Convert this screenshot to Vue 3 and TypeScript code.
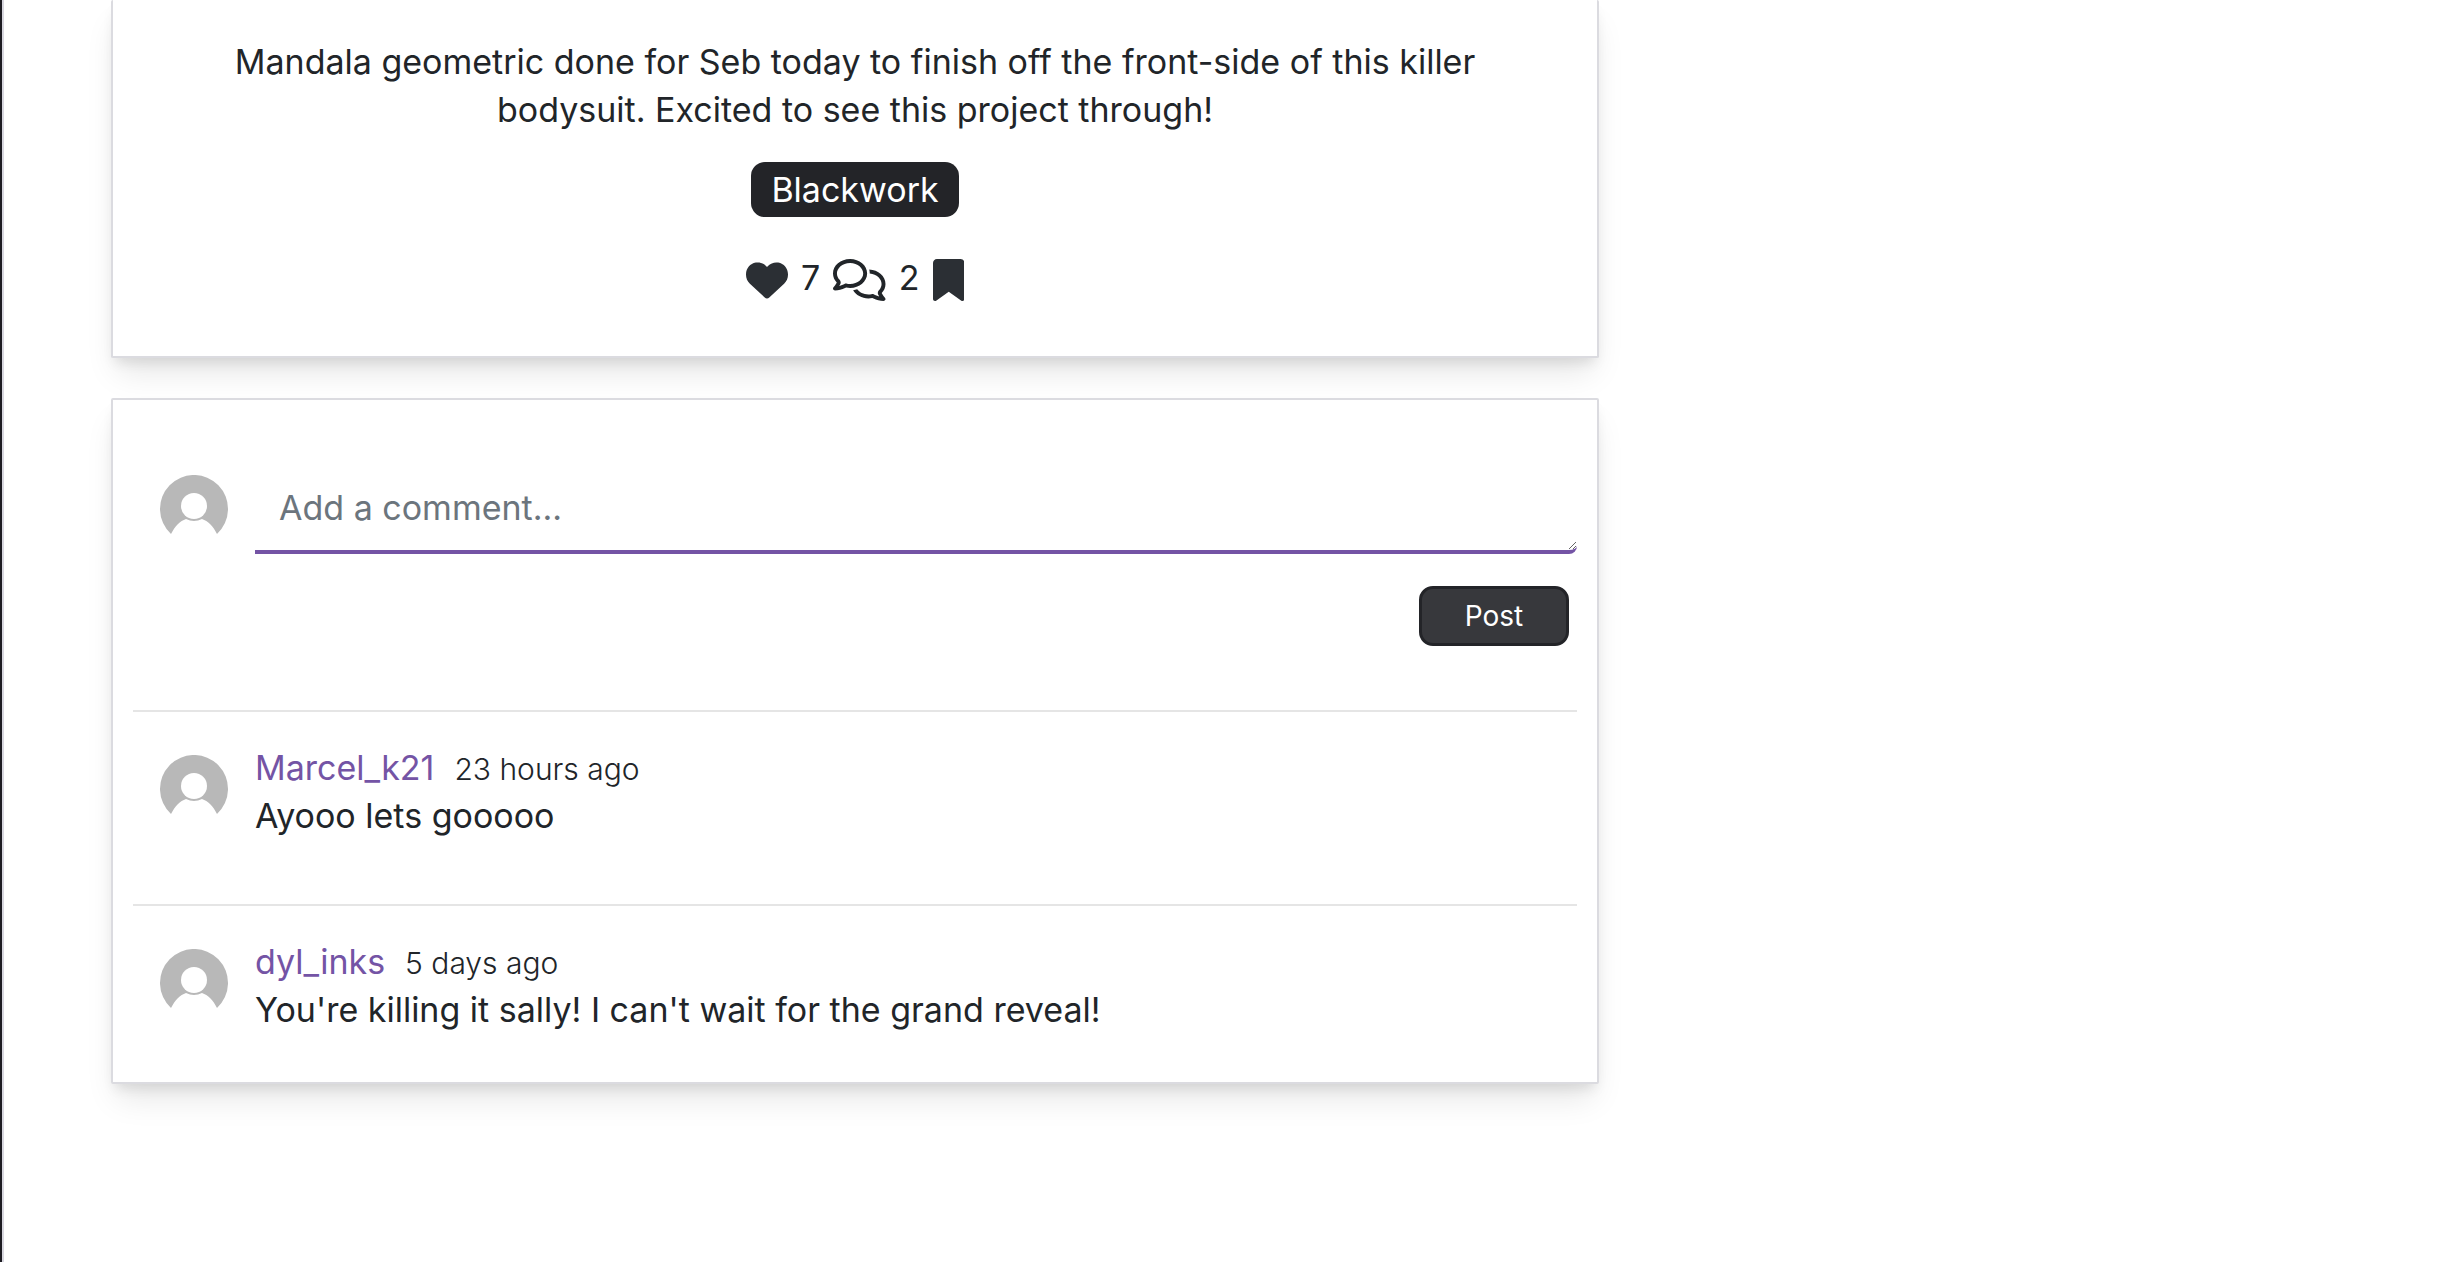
<script setup lang="ts">
import { ref } from 'vue'

interface Comment {
  id: number
  owner: string
  updated: string
  content: string
}

const caption = 'Mandala geometric done for Seb today to finish off the front-side of this killer bodysuit. Excited to see this project through!'
const style = 'Blackwork'
const likes = 7
const commentCount = 2
const draft = ref('')
const comments: Comment[] = [
  { id: 1, owner: 'Marcel_k21', updated: '23 hours ago', content: 'Ayooo lets gooooo' },
  { id: 2, owner: 'dyl_inks', updated: '5 days ago', content: "You're killing it sally! I can't wait for the grand reveal!" },
]
</script>

<template>
  <div class="page">
    <main class="feed">
      <article class="card post">
        <p class="caption">{{ caption }}</p>
        <span class="badge">{{ style }}</span>
        <div class="actions">
          <button class="icon-button" type="button" aria-label="Like">
            <svg class="icon" viewBox="0 0 512 512" aria-hidden="true">
              <path d="M47.6 300.4L228.3 469.1c7.5 7 17.4 10.9 27.7 10.9s20.2-3.9 27.7-10.9L464.4 300.4c30.4-28.3 47.6-68 47.6-109.5v-5.8c0-69.9-50.5-129.5-119.4-141C347 36.5 300.6 51.4 268 84L256 96 244 84c-32.6-32.6-79-47.5-124.6-39.9C50.5 55.6 0 115.2 0 185.1v5.8c0 41.5 17.2 81.2 47.6 109.5z" />
            </svg>
          </button>
          <span class="count">{{ likes }}</span>
          <a class="icon-button comments-link" href="#comments" aria-label="Comments">
            <svg class="icon" viewBox="0 0 640 512" aria-hidden="true">
              <path d="M88.2 309.1c9.8-18.3 6.8-40.8-7.5-55.8C59.4 230.9 48 204 48 176c0-63.5 63.8-128 160-128s160 64.5 160 128s-63.8 128-160 128c-13.1 0-25.8-1.3-37.8-3.6c-10.4-2-21.2-.6-30.7 4.2c-4.1 2.1-8.3 4.1-12.6 6c-16 7.2-32.9 13.5-49.9 18c2.8-4.6 5.4-9.1 7.9-13.6c1.1-1.9 2.2-3.9 3.2-5.9zM0 176c0 41.8 17.2 80.1 45.9 110.3c-.9 1.7-1.9 3.5-2.8 5.1c-10.3 18.4-22.3 36.5-36.6 52.1c-6.6 7-8.3 17.2-4.6 25.9C5.8 378.3 14.4 384 24 384c43 0 86.5-13.3 122.7-29.7c4.8-2.2 9.6-4.5 14.2-6.8c15.1 3 30.9 4.5 47.1 4.5c114.9 0 208-78.8 208-176S322.9 0 208 0S0 78.8 0 176zM432 480c16.2 0 31.9-1.6 47.1-4.5c4.6 2.3 9.4 4.6 14.2 6.8C529.5 498.7 573 512 616 512c9.6 0 18.2-5.7 22-14.5c3.8-8.8 2-19-4.6-25.9c-14.2-15.6-26.2-33.7-36.6-52.1c-.9-1.7-1.9-3.4-2.8-5.1C622.8 384.1 640 345.8 640 304c0-94.4-87.9-171.5-198.2-175.8c4.1 15.2 6.2 31.2 6.2 47.8l0 .6c87.2 6.7 144 67.5 144 127.4c0 28-11.4 54.9-32.7 77.2c-14.3 15-17.3 37.6-7.5 55.8c1.1 2 2.2 4 3.2 5.9c2.5 4.5 5.2 9 7.9 13.6c-17-4.5-33.9-10.7-49.9-18c-4.3-1.9-8.5-3.9-12.6-6c-9.5-4.8-20.3-6.2-30.7-4.2c-12.1 2.4-24.7 3.6-37.8 3.6c-61.7 0-110-26.5-136.8-62.3c-16 5.4-32.8 9.4-50 11.8C279 439.8 350 480 432 480z" />
            </svg>
          </a>
          <span class="count">{{ commentCount }}</span>
          <button class="icon-button" type="button" aria-label="Bookmark">
            <svg class="icon" viewBox="0 0 384 512" aria-hidden="true">
              <path d="M0 48V487.7C0 501.1 10.9 512 24.3 512c5 0 9.9-1.5 14-4.4L192 400 345.7 507.6c4.1 2.9 9 4.4 14 4.4c13.4 0 24.3-10.9 24.3-24.3V48c0-26.5-21.5-48-48-48H48C21.5 0 0 21.5 0 48z" />
            </svg>
          </button>
        </div>
      </article>

      <section id="comments" class="card discussion">
        <form class="comment-form" @submit.prevent>
          <div class="row">
            <svg class="avatar" viewBox="0 0 68 68" aria-hidden="true">
              <path d="M11 59A34 34 0 1 1 57 59C53 51 48 46 42 44Q34 48 26 44C20 46 15 51 11 59Z" />
              <circle cx="34" cy="31" r="13" />
            </svg>
            <textarea v-model="draft" class="draft" rows="1" placeholder="Add a comment..." aria-label="Add a comment"></textarea>
          </div>
          <button class="submit" type="submit">Post</button>
        </form>

        <div v-for="comment in comments" :key="comment.id" class="comment">
          <svg class="avatar" viewBox="0 0 68 68" aria-hidden="true">
            <path d="M11 59A34 34 0 1 1 57 59C53 51 48 46 42 44Q34 48 26 44C20 46 15 51 11 59Z" />
            <circle cx="34" cy="31" r="13" />
          </svg>
          <div class="comment-body">
            <div class="comment-head">
              <a class="owner" href="#">{{ comment.owner }}</a>
              <span class="updated">{{ comment.updated }}</span>
            </div>
            <p class="content">{{ comment.content }}</p>
          </div>
        </div>
      </section>
    </main>
  </div>
</template>

<style>
body {
  margin: 0;
  background: #fff;
}
</style>

<style scoped>
.page {
  box-sizing: border-box;
  min-height: 100vh;
  display: grid;
  grid-template-columns: 2fr 1fr;
  padding: 0 121px 0 109px;
  border-left: 2px solid #1d1c22;
  box-shadow: inset 2px 0 #d8d7df;
  color: #212529;
  font-family: Inter, "Noto Sans", sans-serif;
  font-size: 34px;
  font-weight: 400;
  line-height: 48px;
}

.feed {
  display: flex;
  flex-direction: column;
  gap: 40px;
  min-width: 0;
}

.card {
  background: #fff;
  border: 2px solid #dbdbe0;
  border-radius: 2px;
  box-shadow: 0 20px 30px -6px rgba(0, 0, 0, 0.1), 0 8px 12px -4px rgba(0, 0, 0, 0.1);
}

.post {
  display: flex;
  flex-direction: column;
  align-items: center;
  border-top: 0;
  padding: 38px 100px 55px;
  text-align: center;
}

.caption {
  margin: 0 0 28px;
}

.badge {
  padding: 0 20px;
  border-radius: 14px;
  background: #232428;
  color: #fff;
  line-height: 55px;
}

.actions {
  display: flex;
  align-items: flex-end;
  gap: 13px;
  margin-top: 38px;
  line-height: 46px;
}

.icon-button {
  display: block;
  padding: 0;
  border: 0;
  background: none;
  color: #2b2f34;
  cursor: pointer;
}

.comments-link {
  color: #212529;
}

.icon {
  display: block;
  height: 42px;
  fill: currentColor;
}

.discussion {
  padding: 0 20px;
}

.comment-form {
  display: flex;
  flex-direction: column;
  padding: 75px 0 64px 27px;
}

.row {
  display: flex;
}

.avatar {
  flex: none;
  width: 68px;
  height: 68px;
  margin-right: 27px;
  fill: #b8b8b8;
}

.avatar circle {
  fill: #fff;
}

.draft {
  box-sizing: border-box;
  flex: 1;
  min-width: 0;
  height: 79px;
  padding: 9px 24px 18px;
  border: 0;
  border-bottom: 4px solid #7454a5;
  border-bottom-right-radius: 8px;
  outline: 0;
  background: transparent;
  color: inherit;
  font: inherit;
  overflow: hidden;
  resize: vertical;
}

.draft::placeholder {
  color: #6c757d;
  opacity: 1;
}

.submit {
  align-self: flex-end;
  box-sizing: border-box;
  width: 150px;
  height: 60px;
  margin: 32px 8px 0 0;
  padding: 0;
  border: 3px solid #232428;
  border-radius: 14px;
  background: #37383c;
  color: #fff;
  font: inherit;
  font-size: 28px;
  cursor: pointer;
}

.comment {
  display: flex;
  align-items: flex-start;
  padding: 32px 0 64px 27px;
  border-top: 2px solid #e5e5e5;
}

.comment:last-child {
  padding-bottom: 48px;
}

.comment .avatar {
  margin-top: 11px;
}

.comment-body {
  flex: 1;
  min-width: 0;
}

.comment-head {
  display: flex;
  align-items: baseline;
  gap: 20px;
}

.owner {
  color: #7454a5;
  text-decoration: none;
}

.updated {
  font-size: 30px;
  font-weight: 300;
  line-height: 32px;
}

.content {
  margin: 0;
}
</style>
